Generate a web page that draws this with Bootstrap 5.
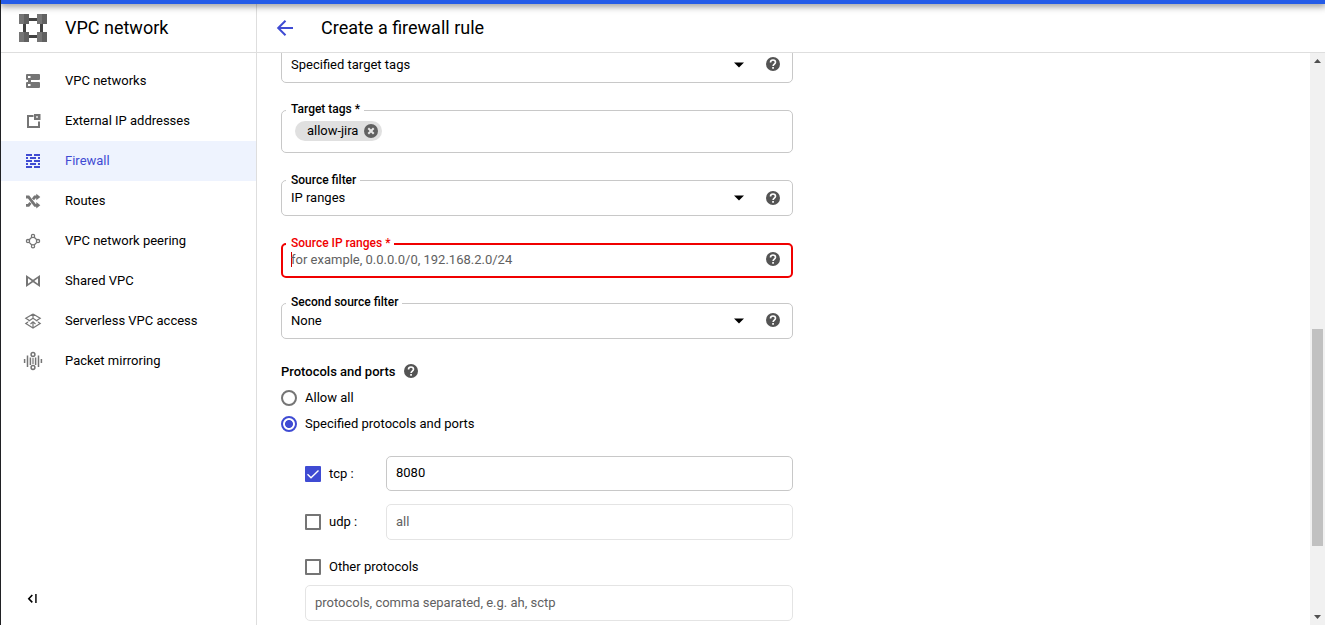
<!DOCTYPE html>
<html lang="en">
<head>
<meta charset="utf-8">
<meta name="viewport" content="width=device-width, initial-scale=1">
<title>Create a firewall rule</title>
<link href="https://cdn.jsdelivr.net/npm/bootstrap@5.3.0/dist/css/bootstrap.min.css" rel="stylesheet">
<style>
:root{--accent:#3f4bd3;--line:#c8c8c8;--grey:#757575}
body{font-family:Roboto,"Liberation Sans",sans-serif;font-size:13px;line-height:20px;color:#000;background:#fff;border-left:1px solid #202124;height:100vh;overflow:hidden}
svg{display:block;flex:none}
.top-strip{height:4px;background:#245be7;box-shadow:0 1px 7px 1px rgba(0,0,0,.5);position:relative;z-index:3;flex:none}
.app-head{height:49px;border-bottom:1px solid #dedede;font-size:18px;line-height:24px;flex:none}
.side-w{width:256px;flex:none;border-right:1px solid #dedede}
.brand{padding-left:18px;gap:18px}
.title-area{padding-left:19px;gap:26px}
.side-nav{padding-top:8px}
.side-nav .nav-link{height:40px;padding:0 0 0 20px;gap:20px;color:#000}
.side-nav .nav-link svg{width:24px;height:24px;color:var(--grey)}
.side-nav .nav-link.active{background:#eef3fe;color:var(--accent)}
.side-nav .nav-link.active svg{color:var(--accent)}
.fold{padding:0 0 16px 25px}
.form-col{width:512px;margin-left:24px;margin-top:-6px}
.field{position:relative;border:1px solid var(--line);border-radius:5px;height:36px;padding:0 11px 0 9px;flex:none}
.field.bad{height:35px;border:2px solid #f00000;padding:0 10px 2px 8px}
.field.bad .cap{color:#f00000;left:3px;top:-10px}
.field.off{border-color:#e4e4e4}
.cap{position:absolute;left:4px;top:-9px;padding:0 4px 0 5px;background:#fff;font-size:12px;font-weight:500;line-height:16px;white-space:nowrap}
.cap.high{top:-10px}
.field input{border:0;padding:0;outline:0;background:none;min-width:0;color:#000;height:20px;line-height:20px}
.field input::placeholder,.hint{color:#616161}
.tip{width:16px;height:16px;color:#545454}
.tip.up{margin-bottom:2px}
.arrow{margin-right:21px}
.tag{background:#e0e0e0;height:20px;border-radius:10px;padding:0 4px 0 12px;gap:6px;letter-spacing:-.03px}
.caret-bar{width:1px;height:15px;background:#c00;margin-right:-1px}
.form-check-input.rb,.form-check-input.cb{width:16px;height:16px;margin:0;float:none;border:2px solid var(--grey);background-size:100%;flex:none}
.form-check-input.cb{border-radius:1px}
.form-check-input.rb:checked{border-color:var(--accent);background-color:#fff;background-image:radial-gradient(circle,var(--accent) 3.6px,transparent 4.4px)}
.form-check-input.cb:checked{border-color:var(--accent);background-color:var(--accent);background-image:none}
.tick{position:absolute;left:0;top:0}
.proto{margin-left:24px}
.proto-name{width:81px;flex:none}
.bar{width:15px;background:#f1f1f1;flex:none}
.thumb{width:11px;height:217px;background:#c1c1c1}
.track-top{height:263px}
</style>
</head>
<body class="d-flex flex-column">
<svg width="0" height="0" class="position-absolute">
  <symbol id="help" viewBox="0 0 16 16"><circle cx="8" cy="8" r="7" fill="currentColor"/><path d="M5.500 6.500C5.500 4.900 6.600 4 8 4s2.500.9 2.500 2.300c0 1.700-2.400 1.900-2.400 3.700" fill="none" stroke="#fff" stroke-width="1.600"/><path d="M7.200 11h1.700v1.700H7.200z" fill="#fff"/></symbol>
</svg>
<div class="top-strip"></div>
<header class="app-head d-flex">
  <div class="side-w brand d-flex align-items-center">
    <svg width="28" height="28" viewBox="0 0 28 28"><path d="M9 4h10v3H9zM9 21h10v3H9zM4 9h3v10H4zM21 9h3v10h-3z" fill="#424242"/><path d="M0 0h10v10H0zM18 0h10v10H18zM0 18h10v10H0zM18 18h10v10H18z" fill="#616161"/><path d="M0 0h5v10H0zM18 0h5v10h-5zM0 18h5v10H0zM18 18h5v10h-5z" fill="#757575"/></svg>
    <span>VPC network</span>
  </div>
  <div class="title-area d-flex align-items-center">
    <svg width="19" height="18" viewBox="0 0 19 18"><path d="M17 9H3M9.500 1.700 2.200 9l7.300 7.300" fill="none" stroke="#3f4bd3" stroke-width="2"/></svg>
    <span>Create a firewall rule</span>
  </div>
</header>
<div class="d-flex flex-grow-1 overflow-hidden">
  <aside class="side-w d-flex flex-column justify-content-between">
    <nav class="nav flex-column side-nav">
      <a class="nav-link d-flex align-items-center" href="#"><svg viewBox="0 0 24 24"><path d="M6 5h12q1 0 1 1v4q0 1-1 1H6q-1 0-1-1V6q0-1 1-1zM6 13h12q1 0 1 1v4q0 1-1 1H6q-1 0-1-1v-4q0-1 1-1zM7 10h3v4H7z" fill="currentColor"/><path d="M7 7h2.500v2H7zM7 15h2.500v2H7z" fill="#fff"/></svg>VPC networks</a>
      <a class="nav-link d-flex align-items-center" href="#"><svg viewBox="0 0 24 24"><path d="M12.500 7H7v11h11v-5.500" fill="none" stroke="currentColor" stroke-width="2"/><path d="M13 5h6.500v6H13z" fill="currentColor"/><path d="M15 7h2v2h-2z" fill="#ccc"/></svg>External IP addresses</a>
      <a class="nav-link active d-flex align-items-center" href="#"><svg viewBox="0 0 24 24" shape-rendering="crispEdges"><path d="M5 5h6v2H5zM13 5h6v2h-6zM5 8h2v2H5zM9 8h6v2H9zM17 8h2v2h-2zM5 11h6v2H5zM13 11h6v2h-6zM5 14h2v2H5zM9 14h6v2H9zM17 14h2v2h-2zM5 17h6v2H5zM13 17h6v2h-6z" fill="currentColor"/></svg>Firewall</a>
      <a class="nav-link d-flex align-items-center" href="#"><svg viewBox="0 0 24 24"><path d="M5 8h2.500l6.500 8.300h2M5 16.300h2.500l2-2.500M12 10.300 13.800 8H16" fill="none" stroke="currentColor" stroke-width="2.800"/><path d="M15.300 4.800l4 3.200-4 3.200zM15.300 13.100l4 3.200-4 3.200z" fill="currentColor"/></svg>Routes</a>
      <a class="nav-link d-flex align-items-center" href="#"><svg viewBox="0 0 24 24"><g fill="none" stroke="currentColor" stroke-width="1.300"><circle cx="12" cy="7" r="1.600"/><circle cx="12" cy="17.200" r="1.600"/><circle cx="7" cy="12.100" r="1.600"/><circle cx="17" cy="12.100" r="1.600"/><path d="M10.800 8.200 8.200 10.800M13.200 8.200l2.600 2.600M8.200 13.400l2.600 2.600M15.800 13.400 13.200 16"/></g></svg>VPC network peering</a>
      <a class="nav-link d-flex align-items-center" href="#"><svg viewBox="0 0 24 24"><path fill-rule="evenodd" d="M5 6l7 4.700L19 6v12l-7-4.700L5 18zM7 9.300v5.400l3.700-2.700zM17 9.300v5.400L13.300 12z" fill="currentColor"/></svg>Shared VPC</a>
      <a class="nav-link d-flex align-items-center" href="#"><svg viewBox="0 0 24 24"><g fill="none" stroke="currentColor" stroke-width="1.200"><path d="M12 5 4.800 9.300 8 11.200M12 5l7.200 4.300L16 11.200M12 5v4M7.500 12.300 12 9.300l4.500 3M7 13l-2.200 1.500L12 19l7.200-4.500L17 13M12 12.500V19M9.500 15l2.500-2.200 2.500 2.200"/></g></svg>Serverless VPC access</a>
      <a class="nav-link d-flex align-items-center" href="#"><svg viewBox="0 0 24 24"><g fill="none" stroke="currentColor" stroke-width="1.500"><circle cx="12" cy="5.500" r="1.900"/><circle cx="12" cy="18.500" r="1.900"/><path d="M3.600 10v4M6.500 6.500v11.500M9.400 8.500v7.500M14.600 8.500v7.500M17.500 6.500v11.500M20.400 10v4"/><path d="M12 9v6" stroke-width="1.200"/></g></svg>Packet mirroring</a>
    </nav>
    <div class="fold"><svg width="14" height="20" viewBox="0 0 14 20"><path d="M6.300 6 2.800 9.700l3.500 3.700" fill="none" stroke="#000" stroke-width="1.600"/><path d="M9 5h1.800v9H9z" fill="#333"/></svg></div>
  </aside>
  <main class="flex-grow-1 overflow-hidden">
    <form class="form-col">
      <div class="field d-flex align-items-center"><span class="flex-grow-1">Specified target tags</span><svg class="arrow" width="10" height="6" viewBox="0 0 10 6"><path d="M0 .5h10L5 5.500z"/></svg><svg class="tip up"><use href="#help"/></svg></div>
      <div class="field d-flex align-items-start" style="height:43px;margin-top:27px;padding:10px 12px 0 13px"><label class="cap high">Target tags *</label>
        <span class="tag d-inline-flex align-items-center">allow-jira<svg width="14" height="14" viewBox="0 0 14 14"><circle cx="7" cy="7" r="7" fill="#616161"/><path d="M4.300 4.300l5.400 5.400M9.700 4.300 4.300 9.700" stroke="#e8e8e8" stroke-width="2"/></svg></span></div>
      <div class="field d-flex align-items-center" style="margin-top:27px"><label class="cap">Source filter</label><span class="flex-grow-1">IP ranges</span><svg class="arrow" width="10" height="6" viewBox="0 0 10 6"><path d="M0 .5h10L5 5.500z"/></svg><svg class="tip"><use href="#help"/></svg></div>
      <div class="field bad d-flex align-items-center" style="margin-top:27px"><label class="cap">Source IP ranges *</label><span class="caret-bar"></span><input class="flex-grow-1" type="text" placeholder="for example, 0.0.0.0/0, 192.168.2.0/24"><svg class="tip" style="margin-bottom:1px"><use href="#help"/></svg></div>
      <div class="field d-flex align-items-center" style="margin-top:25px"><label class="cap high">Second source filter</label><span class="flex-grow-1">None</span><svg class="arrow" width="10" height="6" viewBox="0 0 10 6"><path d="M0 .5h10L5 5.500z"/></svg><svg class="tip up"><use href="#help"/></svg></div>
      <div class="d-flex align-items-center" style="margin-top:23px;gap:8px"><span style="font-weight:500">Protocols and ports</span><svg class="tip up"><use href="#help"/></svg></div>
      <label class="d-flex align-items-center gap-2" style="margin-top:6px"><input class="form-check-input rb" type="radio" name="scope">Allow all</label>
      <label class="d-flex align-items-center gap-2" style="margin-top:6px"><input class="form-check-input rb" type="radio" name="scope" checked>Specified protocols and ports</label>
      <div class="proto d-flex align-items-center" style="margin-top:22px"><label class="proto-name position-relative d-flex align-items-center gap-2"><input class="form-check-input cb" type="checkbox" checked><svg class="tick" width="16" height="20" viewBox="0 0 16 20"><path d="M2.500 10.300l3.500 3.500L13.500 6.400" fill="none" stroke="#fff" stroke-width="1.400"/></svg>tcp :</label><div class="field flex-grow-1 d-flex align-items-center" style="height:35px;padding-bottom:2px"><input class="w-100" type="text" value="8080"></div></div>
      <div class="proto d-flex align-items-center" style="margin-top:13px"><label class="proto-name d-flex align-items-center gap-2"><input class="form-check-input cb" type="checkbox">udp :</label><div class="field off flex-grow-1 d-flex align-items-center"><span class="hint">all</span></div></div>
      <label class="proto d-flex align-items-center gap-2" style="margin-top:17px"><input class="form-check-input cb" type="checkbox">Other protocols</label>
      <div class="proto field off d-flex align-items-center" style="margin-top:8px"><span class="hint">protocols, comma separated, e.g. ah, sctp</span></div>
    </form>
  </main>
  <div class="bar d-flex flex-column align-items-center">
    <svg width="15" height="13" viewBox="0 0 15 13"><path d="M4 10h7L7.500 6z" fill="#505050"/></svg>
    <div class="track-top"></div>
    <div class="thumb"></div>
    <svg class="mt-auto" width="15" height="13" viewBox="0 0 15 13"><path d="M4 3h7L7.500 7z" fill="#505050"/></svg>
  </div>
</div>
<script src="https://cdn.jsdelivr.net/npm/bootstrap@5.3.0/dist/js/bootstrap.bundle.min.js"></script>
</body>
</html>
